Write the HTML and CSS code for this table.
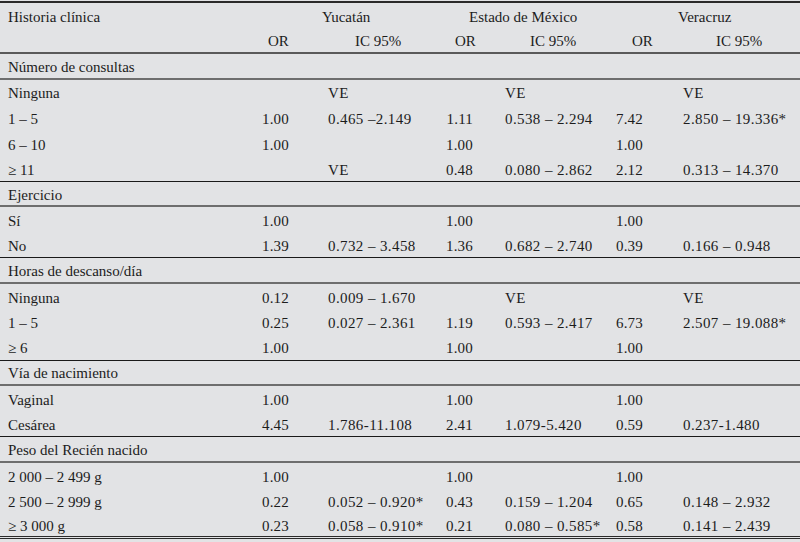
FILE: index.html
```html
<!DOCTYPE html>
<html lang="es">
<head>
<meta charset="utf-8">
<title>Historia clínica</title>
<link rel="stylesheet" href="styles.css">
</head>
<body>
<div class="table">
  <div class="row head-top">
    <div class="label">Historia clínica</div>
    <div class="group g1">Yucatán</div>
    <div class="group g2">Estado de México</div>
    <div class="group g3">Veracruz</div>
  </div>
  <div class="row head-sub line-head">
    <div class="label"></div>
    <div class="hor h1">OR</div><div class="hic i1">IC 95%</div>
    <div class="hor h2">OR</div><div class="hic i2">IC 95%</div>
    <div class="hor h3">OR</div><div class="hic i3">IC 95%</div>
  </div>

  <div class="row section line-gray"><div class="sec">Número de consultas</div></div>
  <div class="row"><div class="label">Ninguna</div><div class="or"></div><div class="ic c1">VE</div><div class="or"></div><div class="ic c2">VE</div><div class="or"></div><div class="ic c3">VE</div></div>
  <div class="row"><div class="label">1 – 5</div><div class="or">1.00</div><div class="ic c1">0.465 –2.149</div><div class="or">1.11</div><div class="ic c2">0.538 – 2.294</div><div class="or">7.42</div><div class="ic c3">2.850 – 19.336*</div></div>
  <div class="row"><div class="label">6 – 10</div><div class="or">1.00</div><div class="ic c1"></div><div class="or">1.00</div><div class="ic c2"></div><div class="or">1.00</div><div class="ic c3"></div></div>
  <div class="row line-black"><div class="label">≥ 11</div><div class="or"></div><div class="ic c1">VE</div><div class="or">0.48</div><div class="ic c2">0.080 – 2.862</div><div class="or">2.12</div><div class="ic c3">0.313 – 14.370</div></div>

  <div class="row section line-gray"><div class="sec">Ejercicio</div></div>
  <div class="row"><div class="label">Sí</div><div class="or">1.00</div><div class="ic c1"></div><div class="or">1.00</div><div class="ic c2"></div><div class="or">1.00</div><div class="ic c3"></div></div>
  <div class="row line-black"><div class="label">No</div><div class="or">1.39</div><div class="ic c1">0.732 – 3.458</div><div class="or">1.36</div><div class="ic c2">0.682 – 2.740</div><div class="or">0.39</div><div class="ic c3">0.166 – 0.948</div></div>

  <div class="row section line-gray"><div class="sec">Horas de descanso/día</div></div>
  <div class="row"><div class="label">Ninguna</div><div class="or">0.12</div><div class="ic c1">0.009 – 1.670</div><div class="or"></div><div class="ic c2">VE</div><div class="or"></div><div class="ic c3">VE</div></div>
  <div class="row"><div class="label">1 – 5</div><div class="or">0.25</div><div class="ic c1">0.027 – 2.361</div><div class="or">1.19</div><div class="ic c2">0.593 – 2.417</div><div class="or">6.73</div><div class="ic c3">2.507 – 19.088*</div></div>
  <div class="row line-black"><div class="label">≥ 6</div><div class="or">1.00</div><div class="ic c1"></div><div class="or">1.00</div><div class="ic c2"></div><div class="or">1.00</div><div class="ic c3"></div></div>

  <div class="row section line-gray"><div class="sec">Vía de nacimiento</div></div>
  <div class="row"><div class="label">Vaginal</div><div class="or">1.00</div><div class="ic c1"></div><div class="or">1.00</div><div class="ic c2"></div><div class="or">1.00</div><div class="ic c3"></div></div>
  <div class="row line-black"><div class="label">Cesárea</div><div class="or">4.45</div><div class="ic c1">1.786-11.108</div><div class="or">2.41</div><div class="ic c2">1.079-5.420</div><div class="or">0.59</div><div class="ic c3">0.237-1.480</div></div>

  <div class="row section line-gray"><div class="sec">Peso del Recién nacido</div></div>
  <div class="row"><div class="label">2 000 – 2 499 g</div><div class="or">1.00</div><div class="ic c1"></div><div class="or">1.00</div><div class="ic c2"></div><div class="or">1.00</div><div class="ic c3"></div></div>
  <div class="row"><div class="label">2 500 – 2 999 g</div><div class="or">0.22</div><div class="ic c1">0.052 – 0.920*</div><div class="or">0.43</div><div class="ic c2">0.159 – 1.204</div><div class="or">0.65</div><div class="ic c3">0.148 – 2.932</div></div>
  <div class="row line-bottom"><div class="label">≥ 3 000 g</div><div class="or">0.23</div><div class="ic c1">0.058 – 0.910*</div><div class="or">0.21</div><div class="ic c2">0.080 – 0.585*</div><div class="or">0.58</div><div class="ic c3">0.141 – 2.439</div></div>
</div>
</body>
</html>
```

FILE: styles.css
```css
html, body {
  margin: 0;
  padding: 0;
  background: #e2e3e5;
}

body {
  width: 800px;
  height: 542px;
  overflow: hidden;
  font-family: "Liberation Serif", "Times New Roman", serif;
  font-size: 15px;
  color: #1c1c1c;
}

.table {
  margin-top: 1px;
  border-top: 2px solid #2a2a2a;
  display: flex;
  flex-direction: column;
}

.row {
  box-sizing: border-box;
  height: 25.55px;
  padding-top: 3px;
  display: grid;
  grid-template-columns: 240px 49px 141px 43px 127px 43px 157px;
  align-items: center;
  white-space: nowrap;
}

.label {
  padding-left: 8px;
}

.sec {
  grid-column: 1 / -1;
  padding-left: 8px;
}

.or {
  text-align: right;
  letter-spacing: 0.2px;
}

.ic {
  letter-spacing: 0.4px;
}

.c1 { padding-left: 39px; }
.c2 { padding-left: 32px; }
.c3 { padding-left: 40px; }

/* header */
.group.g1 { grid-column: 2 / 4; padding-left: 82px; }
.group.g2 { grid-column: 4 / 6; padding-left: 39px; }
.group.g3 { grid-column: 6 / 8; padding-left: 78px; }

.hor.h1 { padding-left: 28px; }
.hor.h2 { padding-left: 25px; }
.hor.h3 { padding-left: 32px; }

.hic.i1 { padding-left: 66px; }
.hic.i2 { padding-left: 57px; }
.hic.i3 { padding-left: 73px; }

/* rules */
.line-head { border-bottom: 2px solid #5a5a5a; }
.line-gray { border-bottom: 2px solid #6e6e6e; }
.line-black { border-bottom: 1px solid #1a1a1a; }
.line-bottom { border-bottom: 3px double #2a2a2a; }
```
